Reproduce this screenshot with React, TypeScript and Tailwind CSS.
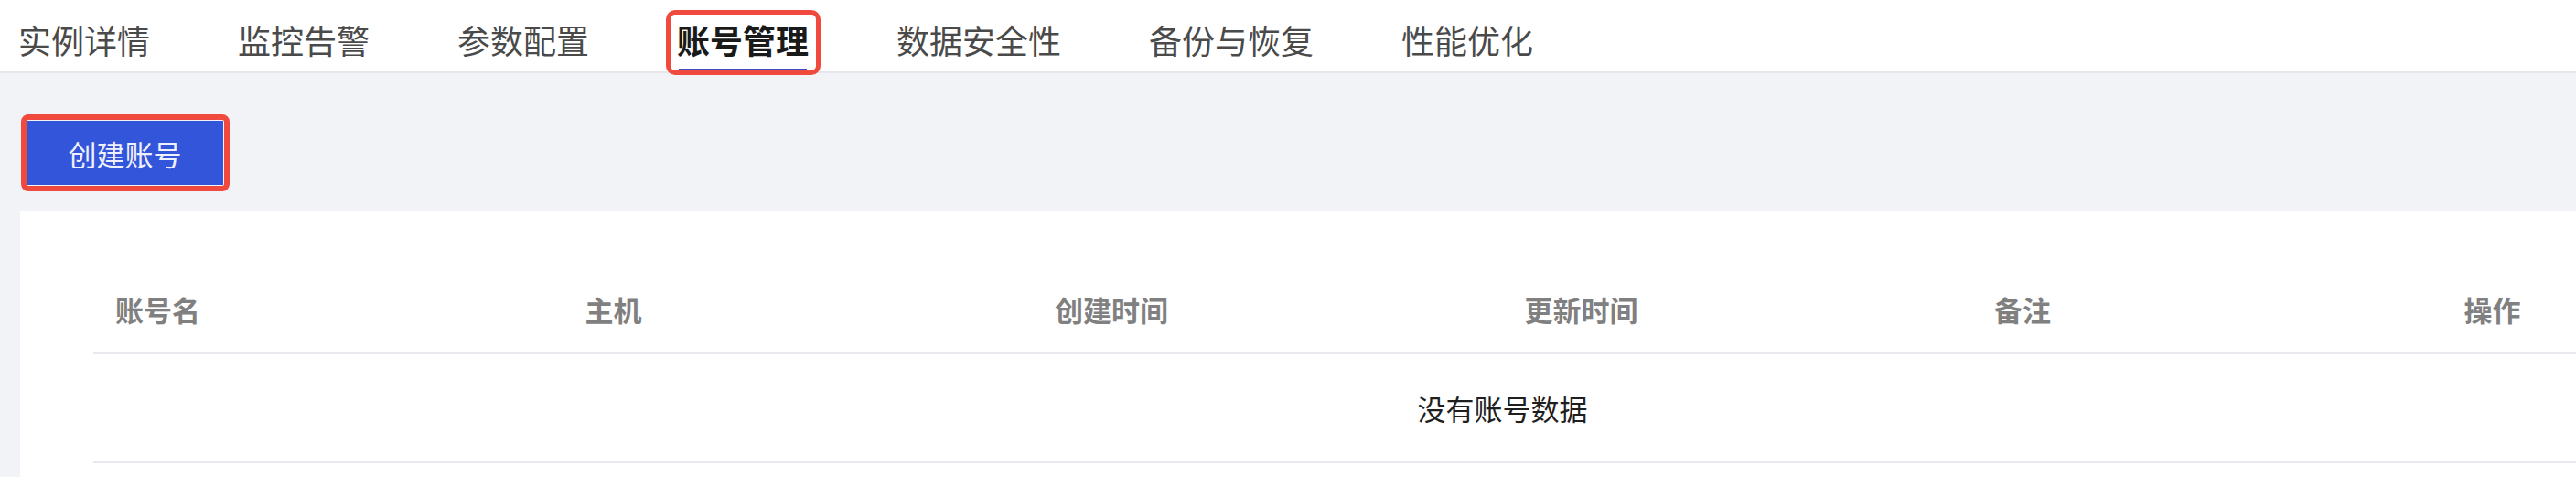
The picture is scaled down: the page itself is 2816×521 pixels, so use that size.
import React from 'react';

const tabs = ['实例详情', '监控告警', '参数配置', '账号管理', '数据安全性', '备份与恢复', '性能优化'];
const columns = ['账号名', '主机', '创建时间', '更新时间', '备注', '操作'];

function App() {
  const active = '账号管理';

  return (
    <div
      className="w-[2816px] h-[521px] overflow-hidden bg-[#f2f3f7]"
      style={{ fontFamily: '"Noto Sans CJK SC", "Noto Sans", sans-serif' }}
    >
      {/* Tabs */}
      <div className="h-[80px] bg-white border-b-2 border-[#e6e6ec] flex items-center pl-[20px] gap-[96px]">
        {tabs.map((tab) => (
          <div key={tab} className="relative h-full flex items-center pt-[8px]">
            <span
              className={
                tab === active
                  ? 'text-[36px] leading-none font-bold text-[#1a1a1a]'
                  : 'text-[36px] leading-none text-[#4a4a4a]'
              }
            >
              {tab}
            </span>
            {tab === active && (
              <>
                <span className="absolute left-[2px] right-[2px] bottom-[1px] h-[2px] bg-[#3a4fc4]" />
                <span className="absolute left-[-12px] right-[-13px] top-[11px] bottom-[-4px] border-[5px] border-[#ef4a3d] rounded-[10px]" />
              </>
            )}
          </div>
        ))}
      </div>

      {/* Toolbar */}
      <div className="pl-[29px] pt-[52px] pb-[28px]">
        <div className="relative w-[215px]">
          <button className="w-[215px] h-[70px] bg-[#3355d9] text-[#eef0ff] text-[31px] leading-none flex items-center justify-center">
            创建账号
          </button>
          <span className="absolute -left-[6px] -right-[7px] -top-[7px] -bottom-[7px] border-[6px] border-[#ef4a3d] rounded-[8px]" />
        </div>
      </div>

      {/* Card */}
      <div className="ml-[22px] w-[3300px] h-[400px] bg-white pl-[80px] pt-[60px]">
        <div className="w-[3081px]">
          <div className="grid grid-cols-6 h-[97px] border-b-2 border-[#e8e8ee]">
            {columns.map((col) => (
              <div key={col} className="flex items-center pl-[24px] text-[31px] leading-none font-bold text-[#808080]">
                {col}
              </div>
            ))}
          </div>
          <div className="h-[119px] border-b-2 border-[#e8e8ee] flex items-center justify-center text-[31px] leading-none text-[#1f1f1f]">
            没有账号数据
          </div>
        </div>
      </div>
    </div>
  );
}

export default App;
